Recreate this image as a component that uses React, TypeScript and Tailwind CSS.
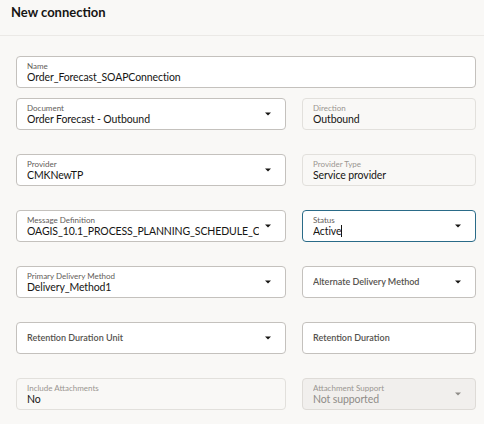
type FieldProps = {
  label: string;
  value?: string;
  select?: boolean;
  variant?: 'normal' | 'readonly' | 'disabled' | 'focused';
  caret?: boolean;
};

function Arrow({ muted }: { muted?: boolean }) {
  return (
    <svg width="6" height="4" viewBox="0 0 6 4" className="shrink-0">
      <path d="M0 0.5 L6 0.5 L3 3.5 Z" fill={muted ? '#8f8c88' : '#161513'} />
    </svg>
  );
}

function Field({ label, value, select, variant = 'normal', caret }: FieldProps) {
  const box = {
    normal: 'bg-white border border-[#c4c1bd]',
    readonly: 'bg-[#f9f8f6] border border-[#e2e0dc]',
    disabled: 'bg-[#f1efed] border border-[#dedbd7]',
    focused: 'bg-white border-[1.5px] border-[#2a6b88]'
  }[variant];

  const labelColor =
    variant === 'readonly' || variant === 'disabled' ? 'text-[#9a9691]' : 'text-[#5f5c58]';
  const valueColor = variant === 'disabled' ? 'text-[#8f8c88]' : 'text-[#161513]';

  return (
    <div className={`h-[32px] rounded-[4px] flex items-center gap-[6px] pl-[10px] pr-[14px] ${box}`}>
      <div className="flex-1 min-w-0 overflow-hidden">
        {value !== undefined ? (
          <>
            <p className={`text-[8px] leading-[10px] ${labelColor}`}>{label}</p>
            <p className={`text-[10.5px] tracking-[-0.1px] leading-[13px] whitespace-nowrap ${valueColor}`}>
              {value}
              {caret && <span className="inline-block w-px h-[12px] bg-[#161513] align-middle -mt-[2px]" />}
            </p>
          </>
        ) : (
          <p className="text-[9px] font-semibold text-[#55524e]">{label}</p>
        )}
      </div>
      {select && <Arrow muted={variant === 'disabled'} />}
    </div>
  );
}

export default function App() {
  return (
    <div className="w-[484px] h-[424px] bg-[#f9f8f6] overflow-hidden" style={{ fontFamily: 'Lato, "Noto Sans", sans-serif' }}>
      <header className="h-[36px] border-b border-[#ebe9e6] px-[11px] pt-[3px]">
        <h1 className="text-[13px] font-bold text-[#161513]">New connection</h1>
      </header>

      <div className="pl-[16px] pr-[8px] pt-[20px] grid grid-cols-[270px_174px] gap-x-[16px]">
        <div className="col-span-2">
          <Field label="Name" value="Order_Forecast_SOAPConnection" />
        </div>

        <div className="mt-[10px]">
          <Field label="Document" value="Order Forecast - Outbound" select />
        </div>
        <div className="mt-[10px]">
          <Field label="Direction" value="Outbound" variant="readonly" />
        </div>

        <div className="mt-[24px]">
          <Field label="Provider" value="CMKNewTP" select />
        </div>
        <div className="mt-[24px]">
          <Field label="Provider Type" value="Service provider" variant="readonly" />
        </div>

        <div className="mt-[24px]">
          <Field label="Message Definition" value="OAGIS_10.1_PROCESS_PLANNING_SCHEDULE_C" select />
        </div>
        <div className="mt-[24px]">
          <Field label="Status" value="Active" select variant="focused" caret />
        </div>

        <div className="mt-[24px]">
          <Field label="Primary Delivery Method" value="Delivery_Method1" select />
        </div>
        <div className="mt-[24px]">
          <Field label="Alternate Delivery Method" select />
        </div>

        <div className="mt-[24px]">
          <Field label="Retention Duration Unit" select />
        </div>
        <div className="mt-[24px]">
          <Field label="Retention Duration" />
        </div>

        <div className="mt-[24px]">
          <Field label="Include Attachments" value="No" variant="readonly" />
        </div>
        <div className="mt-[24px]">
          <Field label="Attachment Support" value="Not supported" select variant="disabled" />
        </div>
      </div>
    </div>
  );
}
